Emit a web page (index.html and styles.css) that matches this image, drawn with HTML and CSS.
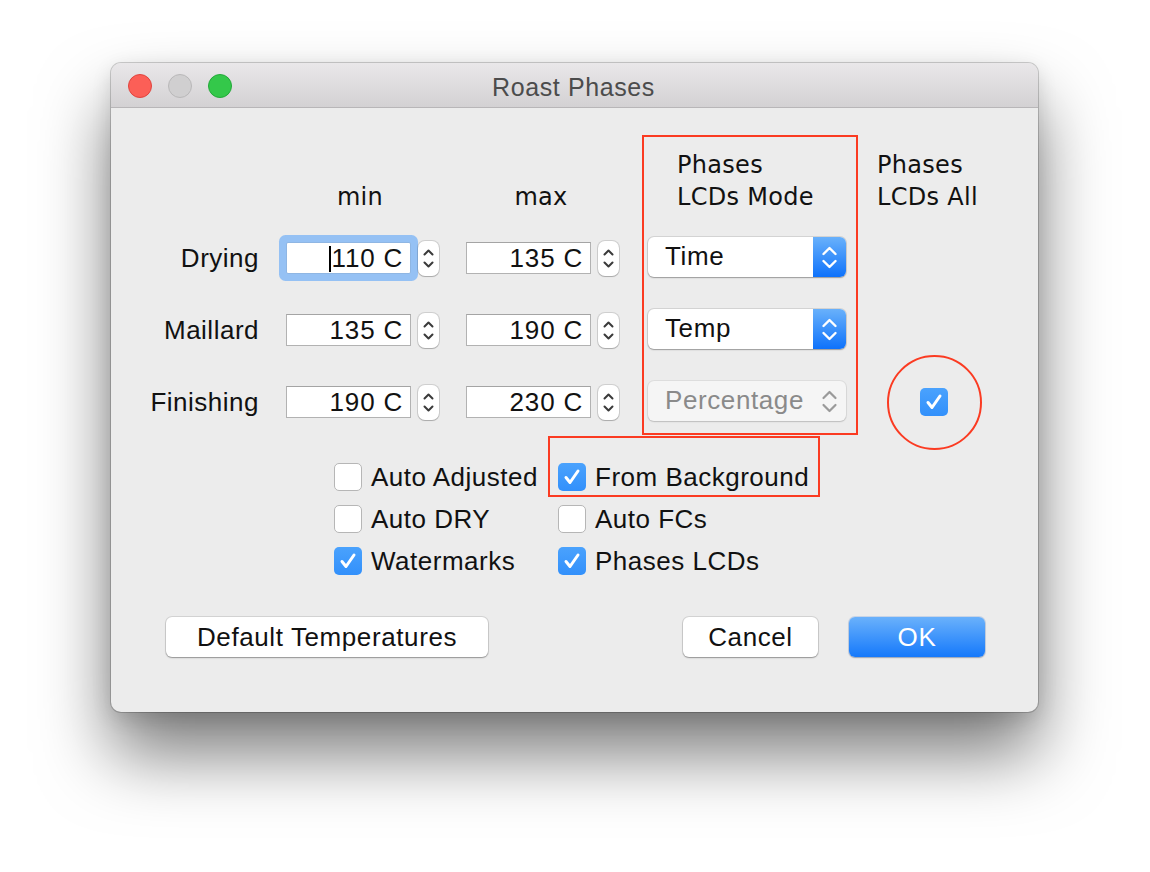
FILE: index.html
```html
<!DOCTYPE html>
<html>
<head>
<meta charset="utf-8">
<link rel="stylesheet" href="styles.css">
</head>
<body>
<div class="stage">
  <div class="window">
    <div class="titlebar">
      <div class="lights">
        <span class="light red"></span>
        <span class="light gray"></span>
        <span class="light green"></span>
      </div>
      <div class="title">Roast Phases</div>
    </div>
    <div class="content">
      <div class="form">
        <div class="hcell"></div>
        <div class="hcell"><div class="hcenter hmin">min</div></div>
        <div class="hcell"><div class="hcenter hmax">max</div></div>
        <div class="hcell hmode">Phases<br>LCDs Mode</div>
        <div class="hcell">Phases<br>LCDs All</div>

        <div class="label">Drying</div>
        <div class="cell"><div class="num focus"><span class="caret"></span>110 C</div><div class="stepper"><svg width="21" height="35" viewBox="0 0 21 35"><path d="M6.5 13.5 L10.5 9.5 L14.5 13.5 M6.5 21.5 L10.5 25.5 L14.5 21.5" fill="none" stroke="#3a3a3a" stroke-width="2" stroke-linecap="round" stroke-linejoin="round"/></svg></div></div>
        <div class="cell"><div class="num">135 C</div><div class="stepper"><svg width="21" height="35" viewBox="0 0 21 35"><path d="M6.5 13.5 L10.5 9.5 L14.5 13.5 M6.5 21.5 L10.5 25.5 L14.5 21.5" fill="none" stroke="#3a3a3a" stroke-width="2" stroke-linecap="round" stroke-linejoin="round"/></svg></div></div>
        <div class="cell"><div class="combo"><span class="ctext">Time</span><span class="cbtn"><svg width="33" height="40" viewBox="0 0 33 40"><path d="M10.5 17 L16.5 11 L22.5 17 M10.5 24 L16.5 30 L22.5 24" fill="none" stroke="#fff" stroke-width="2.4" stroke-linecap="round" stroke-linejoin="round"/></svg></span></div></div>
        <div class="cell"></div>

        <div class="label">Maillard</div>
        <div class="cell"><div class="num">135 C</div><div class="stepper"><svg width="21" height="35" viewBox="0 0 21 35"><path d="M6.5 13.5 L10.5 9.5 L14.5 13.5 M6.5 21.5 L10.5 25.5 L14.5 21.5" fill="none" stroke="#3a3a3a" stroke-width="2" stroke-linecap="round" stroke-linejoin="round"/></svg></div></div>
        <div class="cell"><div class="num">190 C</div><div class="stepper"><svg width="21" height="35" viewBox="0 0 21 35"><path d="M6.5 13.5 L10.5 9.5 L14.5 13.5 M6.5 21.5 L10.5 25.5 L14.5 21.5" fill="none" stroke="#3a3a3a" stroke-width="2" stroke-linecap="round" stroke-linejoin="round"/></svg></div></div>
        <div class="cell"><div class="combo"><span class="ctext">Temp</span><span class="cbtn"><svg width="33" height="40" viewBox="0 0 33 40"><path d="M10.5 17 L16.5 11 L22.5 17 M10.5 24 L16.5 30 L22.5 24" fill="none" stroke="#fff" stroke-width="2.4" stroke-linecap="round" stroke-linejoin="round"/></svg></span></div></div>
        <div class="cell"></div>

        <div class="label">Finishing</div>
        <div class="cell"><div class="num">190 C</div><div class="stepper"><svg width="21" height="35" viewBox="0 0 21 35"><path d="M6.5 13.5 L10.5 9.5 L14.5 13.5 M6.5 21.5 L10.5 25.5 L14.5 21.5" fill="none" stroke="#3a3a3a" stroke-width="2" stroke-linecap="round" stroke-linejoin="round"/></svg></div></div>
        <div class="cell"><div class="num">230 C</div><div class="stepper"><svg width="21" height="35" viewBox="0 0 21 35"><path d="M6.5 13.5 L10.5 9.5 L14.5 13.5 M6.5 21.5 L10.5 25.5 L14.5 21.5" fill="none" stroke="#3a3a3a" stroke-width="2" stroke-linecap="round" stroke-linejoin="round"/></svg></div></div>
        <div class="cell"><div class="combo disabled"><span class="ctext">Percentage</span><span class="cbtn"><svg width="33" height="40" viewBox="0 0 33 40"><path d="M10.5 17 L16.5 11 L22.5 17 M10.5 24 L16.5 30 L22.5 24" fill="none" stroke="#9a9a9a" stroke-width="2.2" stroke-linecap="round" stroke-linejoin="round"/></svg></span></div></div>
        <div class="cell"><span class="box checked allbox"><svg width="28" height="28" viewBox="0 0 28 28"><path d="M8 14.5 L12 19.5 L20 8" fill="none" stroke="#fff" stroke-width="3" stroke-linecap="round" stroke-linejoin="round"/></svg></span></div>
      </div>

      <div class="checks">
        <div class="check"><span class="box"></span><span>Auto Adjusted</span></div>
        <div class="check"><span class="box checked"><svg width="28" height="28" viewBox="0 0 28 28"><path d="M8 14.5 L12 19.5 L20 8" fill="none" stroke="#fff" stroke-width="3" stroke-linecap="round" stroke-linejoin="round"/></svg></span><span>From Background</span></div>
        <div class="check"><span class="box"></span><span>Auto DRY</span></div>
        <div class="check"><span class="box"></span><span>Auto FCs</span></div>
        <div class="check"><span class="box checked"><svg width="28" height="28" viewBox="0 0 28 28"><path d="M8 14.5 L12 19.5 L20 8" fill="none" stroke="#fff" stroke-width="3" stroke-linecap="round" stroke-linejoin="round"/></svg></span><span>Watermarks</span></div>
        <div class="check"><span class="box checked"><svg width="28" height="28" viewBox="0 0 28 28"><path d="M8 14.5 L12 19.5 L20 8" fill="none" stroke="#fff" stroke-width="3" stroke-linecap="round" stroke-linejoin="round"/></svg></span><span>Phases LCDs</span></div>
      </div>

      <div class="buttons">
        <div class="btn btn-default">Default Temperatures</div>
        <div class="spacer"></div>
        <div class="btn btn-cancel">Cancel</div>
        <div class="btn btn-ok">OK</div>
      </div>
    </div>

    <div class="mark mark-rect1"></div>
    <div class="mark mark-rect2"></div>
    <div class="mark mark-circle"></div>
  </div>
</div>
</body>
</html>
```

FILE: styles.css
```css
* { box-sizing: border-box; }
html, body {
  margin: 0;
  padding: 0;
  background: #ffffff;
}
body {
  font-family: "Liberation Sans", Arial, sans-serif;
  color: #111;
}
.stage {
  padding: 63px 0 0 111px;
  height: 872px;
  overflow: hidden;
}
.window {
  position: relative;
  width: 927px;
  height: 649px;
  background: #ececec;
  border-radius: 10px;
  box-shadow: 0 0 0 1px rgba(0,0,0,0.18), 0 42px 70px rgba(0,0,0,0.52), 0 6px 20px rgba(0,0,0,0.12);
}
.titlebar {
  height: 45px;
  position: relative;
  display: flex;
  align-items: center;
  justify-content: center;
  background: linear-gradient(#e9e7e9, #d3d1d3);
  border-bottom: 1px solid #b8b6b8;
  border-radius: 10px 10px 0 0;
}
.lights {
  position: absolute;
  left: 17px;
  top: 11px;
  display: flex;
  gap: 16px;
}
.light {
  width: 24px;
  height: 24px;
  border-radius: 50%;
  display: block;
}
.light.red { background: #fc5f57; border: 1px solid #e0443e; }
.light.gray { background: #d0cfd0; border: 1px solid #b9b8b9; }
.light.green { background: #34c84a; border: 1px solid #23a939; }
.title {
  font-size: 25px;
  color: #4c4c4c;
  letter-spacing: 0.6px;
  margin-top: 5px;
  margin-left: -2px;
}
.content {
  padding: 41px 0 0 0;
}
.form {
  display: grid;
  grid-template-columns: 175px 180px 182px 229px 1fr;
  grid-template-rows: 73px 72px 72px 72px;
}
.hcell {
  font-family: "DejaVu Sans", sans-serif;
  font-size: 24px;
  letter-spacing: 0.3px;
  line-height: 32px;
  color: #111;
  display: flex;
  align-items: flex-end;
  padding-bottom: 9px;
}
.hcenter {
  width: 152px;
  text-align: center;
}
.hmin { padding-right: 4px; }
.hmax { padding-right: 2px; }
.hmode {
  padding-left: 29px;
}
.label {
  font-size: 26px;
  letter-spacing: 0.5px;
  padding-right: 27px;
  display: flex;
  align-items: center;
  justify-content: flex-end;
  padding-top: 1px;
}
.cell {
  display: flex;
  align-items: center;
}
.num {
  width: 125px;
  height: 32px;
  background: #fff;
  border: 1px solid #b2b2b2;
  border-top-color: #a4a4a4;
  font-size: 26px;
  letter-spacing: 0.8px;
  line-height: 30px;
  text-align: right;
  padding-right: 7px;
}
.num.focus {
  border-radius: 2px;
  box-shadow: 0 0 0 7px #95c1f4;
  border-color: #8fb6e3;
}
.caret {
  display: inline-block;
  width: 2px;
  height: 26px;
  background: #000;
  vertical-align: -5px;
  margin-right: 1px;
}
.stepper {
  margin-left: 7px;
  width: 21px;
  height: 35px;
  background: #fff;
  border-radius: 7px;
  box-shadow: 0 0 0 1px rgba(0,0,0,0.12), 0 1px 1px rgba(0,0,0,0.18);
  display: flex;
}
.combo {
  width: 198px;
  height: 40px;
  background: #fff;
  border-radius: 6px;
  box-shadow: 0 0 0 1px rgba(0,0,0,0.1), 0 1px 1.5px rgba(0,0,0,0.28);
  display: flex;
  align-items: center;
  margin-top: -3px;
}
.ctext {
  flex: 1;
  font-size: 26px;
  letter-spacing: 0.6px;
  padding-left: 17px;
}
.cbtn {
  width: 33px;
  height: 40px;
  border-radius: 0 6px 6px 0;
  background: linear-gradient(#69b1fb, #0e72fb);
  display: flex;
}
.combo.disabled {
  background: #f5f5f5;
  box-shadow: 0 0 0 1px rgba(0,0,0,0.06), 0 1px 1.5px rgba(0,0,0,0.15);
}
.combo.disabled .ctext { color: #8a8a8a; }
.combo.disabled .cbtn { background: transparent; }
.box {
  width: 28px;
  height: 28px;
  border-radius: 5px;
  background: #fff;
  border: 1px solid #b6b6b6;
  display: inline-flex;
  flex: none;
}
.box.checked {
  border: none;
  background: linear-gradient(#4aa2fd, #3290fb);
}
.allbox {
  margin-left: 43px;
}
.checks {
  margin-top: 18px;
  padding-left: 223px;
  display: grid;
  grid-template-columns: 224px 224px;
  grid-auto-rows: 42px;
}
.check {
  display: flex;
  align-items: center;
  gap: 9px;
  font-size: 26px;
  letter-spacing: 0.5px;
  white-space: nowrap;
}
.buttons {
  margin-top: 35px;
  padding: 0 53px 0 55px;
  display: flex;
  align-items: center;
}
.spacer { flex: 1; }
.btn {
  height: 40px;
  border-radius: 6px;
  background: #fff;
  font-size: 26px;
  letter-spacing: 0.6px;
  display: flex;
  align-items: center;
  justify-content: center;
  box-shadow: 0 0 0 1px rgba(0,0,0,0.1), 0 1px 1.5px rgba(0,0,0,0.3);
}
.btn-default { width: 322px; }
.btn-cancel { width: 135px; margin-right: 31px; }
.btn-ok {
  width: 136px;
  color: #fff;
  background: linear-gradient(#6ab1fb, #1579fb);
  box-shadow: 0 0 0 1px rgba(0,80,200,0.15), 0 1px 1.5px rgba(0,0,0,0.25);
}
.mark {
  position: absolute;
  border: 2px solid #fb3b22;
  pointer-events: none;
}
.mark-rect1 { left: 531px; top: 72px; width: 216px; height: 300px; }
.mark-rect2 { left: 437px; top: 373px; width: 272px; height: 61px; }
.mark-circle { left: 776px; top: 292px; width: 95px; height: 95px; border-radius: 50%; }
```
